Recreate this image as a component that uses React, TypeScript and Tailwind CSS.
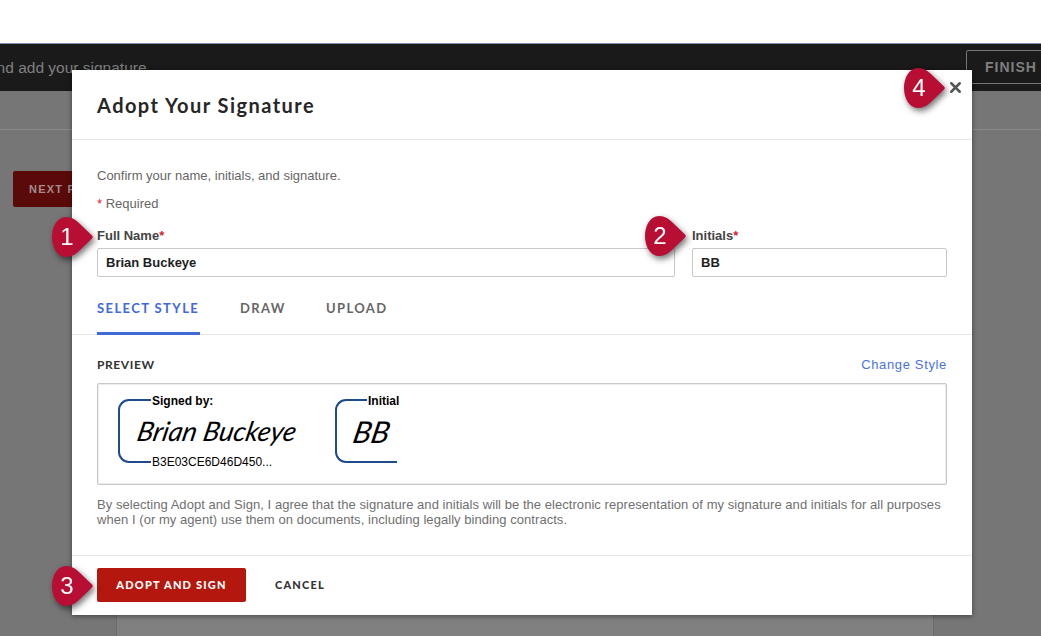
import { X } from 'lucide-react'

const sans = 'font-["Liberation_Sans",Arial,sans-serif]'

function Marker({ n, className }: { n: number; className: string }) {
  return (
    <div className={`absolute w-[41px] h-[40px] drop-shadow-[2px_3px_3px_rgba(0,0,0,0.55)] ${className}`}>
      <svg width="41" height="40" viewBox="0 0 41 40" className="block">
        <path
          d="M14 0C20 0 24 3 28 7L40 18.500Q41.500 20 40 21.500L28 33C24 37 20 40 14 40C5 40 0 30 0 20C0 10 5 0 14 0Z"
          fill="#b80e33"
        />
      </svg>
      <span className={`absolute left-0 top-0 w-[30px] h-[40px] flex items-center justify-center text-white text-[24px] ${sans}`}>
        {n}
      </span>
    </div>
  )
}

function Req() {
  return <span className="text-[#d3262c]">*</span>
}

function Field({ label, value, className }: { label: string; value: string; className: string }) {
  return (
    <div className={className}>
      <div className={`h-[14px] leading-[16px] text-[13px] font-bold text-[#444] ${sans}`}>
        {label}
        <Req />
      </div>
      <div className={`mt-[6px] h-[29px] border border-[#c8c8c8] rounded-[2px] px-[8px] flex items-center text-[13px] font-bold text-[#1e1e1e] ${sans}`}>
        {value}
      </div>
    </div>
  )
}

function Modal() {
  return (
    <div className="absolute left-[72px] top-[70px] w-[900px] h-[545px] bg-white shadow-[0_1px_5px_rgba(0,0,0,0.45)] flex flex-col">
      <div className="h-[70px] shrink-0 border-b border-[#e6e6e6] px-[25px] flex items-center">
        <h1 className='text-[20px] font-bold tracking-[1.45px] text-[#262626] font-["Lato",sans-serif]'>
          Adopt Your Signature
        </h1>
      </div>
      <button className="absolute right-[7px] top-[7px] w-[20px] h-[20px] flex items-center justify-center text-[#555]">
        <X size={17} strokeWidth={3.5} />
      </button>

      <div className={`px-[25px] pt-[28px] text-[13px] text-[#666] ${sans}`}>
        <p className="h-[15px] leading-[15px]">Confirm your name, initials, and signature.</p>
        <p className="mt-[13px] h-[15px] leading-[15px]">
          <Req /> Required
        </p>
      </div>

      <div className="px-[25px] mt-[17px] flex gap-[17px]">
        <Field label="Full Name" value="Brian Buckeye" className="w-[578px]" />
        <Field label="Initials" value="BB" className="w-[255px]" />
      </div>

      <div className='mt-[17px] h-[41px] shrink-0 border-b border-[#e6e6e6] px-[25px] flex gap-[40px] text-[13px] font-bold tracking-[1.4px] font-["Lato",sans-serif]'>
        <div className="w-[103px] whitespace-nowrap h-[41px] border-b-[3px] border-[#4169d8] text-[#4169d8] pt-[5px]">SELECT STYLE</div>
        <div className="text-[#666] pt-[5px]">DRAW</div>
        <div className="text-[#666] pt-[5px]">UPLOAD</div>
      </div>

      <div className="px-[25px] mt-[22px] flex items-center justify-between h-[16px]">
        <span className='text-[12px] font-bold tracking-[0.6px] text-[#333] font-["Lato",sans-serif]'>PREVIEW</span>
        <a className={`text-[13px] tracking-[0.65px] text-[#4a73dc] ${sans}`}>Change Style</a>
      </div>

      <div className="mx-[25px] mt-[10px] h-[102px] shrink-0 border border-[#c8c8c8] shadow-[inset_0_0_0_1px_#ececec] rounded-[2px] pl-[20px] pt-[15px] flex gap-[37px]">
        <div className="relative w-[180px] h-[64px]">
          <div className="w-[33px] h-[64px] border-2 border-r-0 border-[#1f4a8c] rounded-l-[11px]" />
          <span className={`absolute left-[33px] -top-[5px] bg-white pl-[1px] text-[12px] leading-[14px] font-bold text-black ${sans}`}>Signed by:</span>
          <span className={`absolute left-[33px] top-[56px] bg-white pl-[1px] text-[12px] leading-[14px] text-black ${sans}`}>B3E03CE6D46D450...</span>
          <span className='absolute left-[20px] top-[13px] whitespace-nowrap text-[27px] leading-[38px] italic font-normal text-black font-["Lato",sans-serif] -skew-x-12'>
            Brian Buckeye
          </span>
        </div>
        <div className="relative w-[64px] h-[64px]">
          <div className="w-[62px] h-[64px] border-2 border-r-0 border-[#1f4a8c] rounded-l-[11px]" />
          <span className={`absolute left-[32px] -top-[5px] bg-white pl-[1px] pr-[1px] text-[12px] leading-[14px] font-bold text-black ${sans}`}>Initial</span>
          <span className='absolute left-[19px] top-[13px] text-[30px] leading-[38px] italic font-normal text-black font-["Lato",sans-serif] -skew-x-12'>
            BB
          </span>
        </div>
      </div>

      <p className={`px-[25px] mt-[12px] text-[13px] leading-[15px] tracking-[0.05px] text-[#707070] ${sans}`}>
        By selecting Adopt and Sign, I agree that the signature and initials will be the electronic representation of my signature and initials for all purposes when I (or my agent) use them on documents, including legally binding contracts.
      </p>

      <div className="mt-auto h-[60px] shrink-0 border-t border-[#e6e6e6] px-[25px] pt-[12px] flex items-start gap-[29px] font-['Lato',sans-serif]">
        <button className="w-[149px] h-[34px] rounded-[2px] bg-[#b3170d] text-white text-[11px] font-black tracking-[1.2px]">
          ADOPT AND SIGN
        </button>
        <button className="h-[34px] text-[#333] text-[11px] font-black tracking-[1.2px]">CANCEL</button>
      </div>
    </div>
  )
}

export default function App() {
  return (
    <div className="relative w-[1041px] h-[636px] overflow-hidden bg-[#767676]">
      <div className="h-[43px] bg-white" />
      <div className="h-[1px] bg-[#7d8db0]" />
      <div className="h-[47px] bg-[#1a1a1a] flex items-center justify-between overflow-hidden">
        <span className={`-ml-[12px] text-[15.500px] whitespace-nowrap text-[#808080] ${sans}`}>
          and add your signature
        </span>
        <div className={`w-[90px] h-[34px] -mt-[1px] shrink-0 -mr-[15px] border border-[#777] rounded-[2px] pl-[18px] flex items-center text-[14px] font-bold tracking-[1px] text-[#7f7f7f] ${sans}`}>
          FINISH
        </div>
      </div>
      <div className="h-[39px] border-b border-[#8a8a8a]" />
      <div className="pl-[13px] pt-[41px]">
        <div className={`w-[120px] h-[36px] rounded-[2px] bg-[#5a0a08] pl-[16px] flex items-center text-[11px] font-bold tracking-[1.2px] text-[#a58c8b] ${sans}`}>
          NEXT PAGE
        </div>
      </div>
      <div className="ml-[116px] mt-[300px] w-[818px] h-[200px] bg-[#808080] border-x border-[#6c6c6c]" />

      <Modal />
      <Marker n={1} className="left-[52px] top-[217px]" />
      <Marker n={2} className="left-[645px] top-[216px]" />
      <Marker n={3} className="left-[52px] top-[566px]" />
      <Marker n={4} className="left-[904px] top-[68px]" />
    </div>
  )
}
